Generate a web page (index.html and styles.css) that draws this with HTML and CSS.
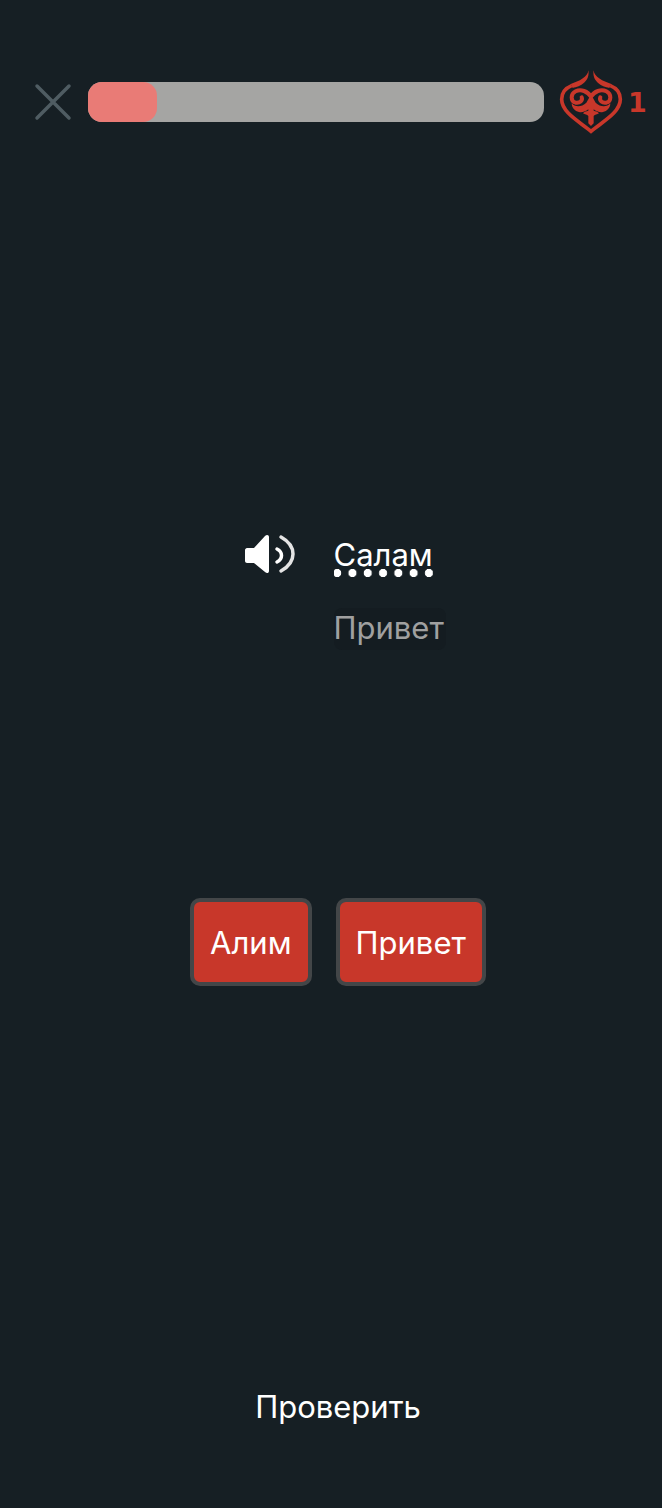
FILE: index.html
```html
<!DOCTYPE html>
<html>

<head>
    <title>Урок</title>
    <link rel="stylesheet" href="styles.css">
</head>

<body>
    <div class="page">
        <div class="top">
            <svg class="close" viewBox="0 0 38 38" width="38" height="38">
                <path d="M3 3L35 35M35 3L3 35"></path>
            </svg>
            <div class="progress">
                <div class="progress-fill"></div>
            </div>
            <div class="lives">
                <svg class="heart" viewBox="0 0 216 216" width="72" height="72">
                    <path class="heart-band" d="M50 59C30 67 20 82 20 100C20 140 75 168 108 196C141 168 196 140 196 100C196 82 186 67 166 59"></path>
                    <path class="heart-fill" d="M100 13C99 33 72 46 47 54L53 66C76 62 106 46 100 13Z"></path>
                    <path class="heart-fill" d="M116 13C117 33 144 46 169 54L163 66C140 62 110 46 116 13Z"></path>
                    <path class="heart-lobe" d="M108 92C98 76 78 68 62 76C46 84 46 106 62 110C74 112 84 104 80 94"></path>
                    <path class="heart-lobe" d="M108 92C118 76 138 68 154 76C170 84 170 106 154 110C142 112 132 104 136 94"></path>
                    <path class="heart-fill" d="M50 112C60 124 80 124 94 110L102 96H114L122 110C136 124 156 124 166 112C166 126 156 136 144 138C134 140 124 136 116 130V134C122 136 128 136 132 142C126 146 120 146 116 150V172L108 180L100 172V150C96 146 90 146 84 142C88 136 94 136 100 134V130C92 136 82 140 72 138C60 136 50 126 50 112Z"></path>
                </svg>
                <span class="lives-count">1</span>
            </div>
        </div>

        <div class="task">
            <svg class="speaker" viewBox="0 0 50 40" width="50" height="40">
                <path class="speaker-body" d="M0 16C0 15 1 14 2 14H9L20 2C22 0 24 1 24 3V37C24 39 22 40 20 38L9 29H2C1 29 0 28 0 27Z"></path>
                <path class="speaker-wave" d="M32 15C38 18 38 25 32 28"></path>
                <path class="speaker-wave outer" d="M36 3C52 12 52 28 36 37"></path>
            </svg>
            <div class="phrase">
                <div class="word">Салам</div>
                <div class="hint">Привет</div>
            </div>
        </div>

        <div class="answers">
            <button class="answer">Алим</button>
            <button class="answer">Привет</button>
        </div>

        <button class="check">Проверить</button>
    </div>
</body>

</html>
```

FILE: styles.css
```css
body {
    margin: 0;
    background-color: #161f24;
    font-family: Inter, "Liberation Sans", sans-serif;
    color: #fff;
}

.page {
    height: 1508px;
    display: flex;
    flex-direction: column;
    align-items: center;
    overflow: hidden;
}

.top {
    width: 100%;
    box-sizing: border-box;
    margin-top: 66px;
    padding-left: 34px;
    display: flex;
    align-items: center;
}

.close {
    flex: none;
}

.close path {
    stroke: #4f5c62;
    stroke-width: 3.5;
    stroke-linecap: round;
    fill: none;
}

.progress {
    width: 456px;
    height: 40px;
    margin-left: 16px;
    border-radius: 14px;
    background-color: #a5a5a3;
}

.progress-fill {
    width: 69px;
    height: 40px;
    border-radius: 14px;
    background-color: #e97b76;
}

.lives {
    display: flex;
    align-items: center;
    margin-left: 11px;
}

.heart {
    flex: none;
}

.heart-fill {
    fill: #c8372a;
}

.heart-band {
    fill: none;
    stroke: #c8372a;
    stroke-width: 11;
}

.heart-lobe {
    fill: none;
    stroke: #c8372a;
    stroke-width: 12;
    stroke-linecap: round;
}

.lives-count {
    margin-left: 1px;
    font-family: "DejaVu Sans", sans-serif;
    font-size: 27px;
    font-weight: 700;
    color: #c8372a;
}

.task {
    margin-top: 396px;
    margin-left: 28px;
    display: flex;
    align-items: flex-start;
}

.speaker {
    flex: none;
}

.speaker-body {
    fill: #fff;
}

.speaker-wave {
    fill: none;
    stroke: #fff;
    stroke-width: 3.5;
    stroke-linecap: round;
}

.speaker-wave.outer {
    stroke: #e4e4e4;
}

.phrase {
    margin-left: 39px;
    width: 112px;
}

.word {
    width: 99px;
    height: 46px;
    font-size: 31px;
    line-height: 42px;
    background-image: radial-gradient(circle, #fff 3.8px, transparent 4.4px);
    background-size: 15.3px 10px;
    background-position: -4.5px 34px;
    background-repeat: repeat-x;
}

.hint {
    margin-top: 28px;
    padding-bottom: 2px;
    border-radius: 8px;
    background-color: #141c21;
    font-size: 31px;
    line-height: 40px;
    color: #a0a0a0;
}

.answers {
    margin-top: 248px;
    margin-left: 14px;
    display: flex;
    gap: 24px;
}

.answer {
    height: 88px;
    padding: 0 16px;
    border: 4px solid #434648;
    border-radius: 10px;
    background-color: #c8372a;
    color: #fff;
    font-family: inherit;
    font-size: 31px;
}

.check {
    margin-top: 401px;
    margin-left: 14px;
    border: none;
    background: none;
    color: #fff;
    font-family: inherit;
    font-size: 31px;
}
```
